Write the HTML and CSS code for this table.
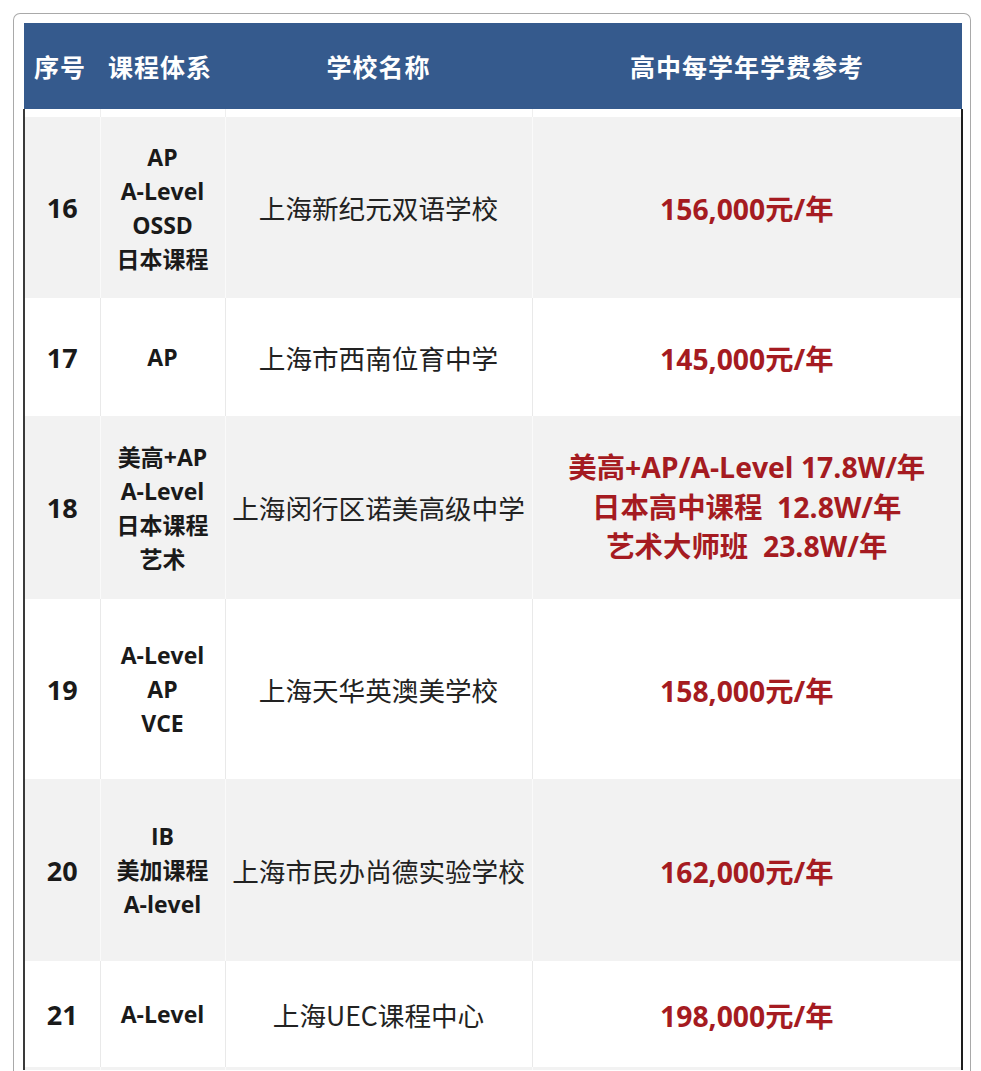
FILE: index.html
```html
<!DOCTYPE html>
<html lang="zh-CN">
<head>
<meta charset="utf-8">
<title>高中学费参考</title>
<link rel="stylesheet" href="styles.css">
</head>
<body>
<div class="frame">
  <table class="fees">
    <colgroup>
      <col class="c-no">
      <col class="c-course">
      <col class="c-school">
      <col class="c-fee">
    </colgroup>
    <thead>
      <tr class="head">
        <th>序号</th>
        <th>课程体系</th>
        <th>学校名称</th>
        <th>高中每学年学费参考</th>
      </tr>
    </thead>
    <tbody>
      <tr class="gap"><td></td><td></td><td></td><td></td></tr>
      <tr class="grey h181">
        <td class="no">16</td>
        <td class="course">AP<br>A-Level<br>OSSD<br>日本课程</td>
        <td class="school">上海新纪元双语学校</td>
        <td class="fee">156,000元/年</td>
      </tr>
      <tr class="white h118">
        <td class="no">17</td>
        <td class="course">AP</td>
        <td class="school">上海市西南位育中学</td>
        <td class="fee">145,000元/年</td>
      </tr>
      <tr class="grey h183">
        <td class="no">18</td>
        <td class="course">美高+AP<br>A-Level<br>日本课程<br>艺术</td>
        <td class="school">上海闵行区诺美高级中学</td>
        <td class="fee multi">美高+AP/A-Level 17.8W/年<br>日本高中课程  12.8W/年<br>艺术大师班  23.8W/年</td>
      </tr>
      <tr class="white h180">
        <td class="no">19</td>
        <td class="course">A-Level<br>AP<br>VCE</td>
        <td class="school">上海天华英澳美学校</td>
        <td class="fee">158,000元/年</td>
      </tr>
      <tr class="grey h182">
        <td class="no">20</td>
        <td class="course">IB<br>美加课程<br>A-level</td>
        <td class="school">上海市民办尚德实验学校</td>
        <td class="fee">162,000元/年</td>
      </tr>
      <tr class="white h106">
        <td class="no">21</td>
        <td class="course">A-Level</td>
        <td class="school">上海UEC课程中心</td>
        <td class="fee">198,000元/年</td>
      </tr>
      <tr class="grey h3">
        <td></td><td></td><td></td><td></td>
      </tr>
    </tbody>
  </table>
</div>
</body>
</html>
```

FILE: styles.css
```css
html, body {
  margin: 0;
  padding: 0;
  background: #ffffff;
}

body {
  font-family: "Open Sans", "Noto Sans CJK SC", sans-serif;
  color: #1c1c1c;
  height: 1071px;
  overflow: hidden;
}

.frame {
  margin: 13px 10px 0 13px;
  border: 1.5px solid #a9a9a9;
  border-bottom: none;
  border-radius: 7px 7px 0 0;
  padding: 9px 8px 0 9px;
  height: 1058px;
  box-sizing: border-box;
  overflow: hidden;
}

.fees {
  width: 938px;
  border-collapse: collapse;
  table-layout: fixed;
}

.c-no { width: 76px; }
.c-course { width: 125px; }
.c-school { width: 307px; }
.c-fee { width: 430px; }

.head {
  height: 86px;
  background: #355a8d;
}

.head th {
  color: #ffffff;
  font-family: "Noto Sans CJK SC", sans-serif;
  font-weight: 700;
  font-size: 25px;
  letter-spacing: 1px;
  padding: 0;
  vertical-align: middle;
  text-align: center;
}

.head th:first-child {
  text-align: left;
  padding-left: 10px;
}

.head th:nth-child(2) {
  text-align: left;
  padding-left: 8px;
}

tbody td {
  padding: 0;
  text-align: center;
  vertical-align: middle;
  border-left: 1px solid #e9e9e9;
}

tbody td:first-child {
  border-left: 2px solid #3a3a3a;
}

tbody td:last-child {
  border-right: 2px solid #1e1e1e;
}

.grey td:not(:first-child) {
  border-left-color: #fafafa;
}

.gap { height: 8px; background: #ffffff; }
.gap td:not(:first-child) { border-left-color: #efefef; }

.grey { background: #f2f2f2; }
.white { background: #ffffff; }

.h181 { height: 181px; }
.h118 { height: 118px; }
.h183 { height: 183px; }
.h180 { height: 180px; }
.h182 { height: 182px; }
.h106 { height: 106px; }
.h3 { height: 3px; }

.no {
  font-weight: 700;
  font-size: 27px;
  color: #1a1a1a;
}

.course {
  font-weight: 700;
  font-size: 23px;
  line-height: 34px;
  color: #1a1a1a;
}

.school {
  font-family: "Noto Sans CJK SC", sans-serif;
  font-weight: 400;
  font-size: 26.6px;
  color: #222222;
}

.fee {
  font-weight: 700;
  font-size: 28.3px;
  color: #a51b21;
}

.fee.multi {
  white-space: pre;
  line-height: 39.5px;
  font-size: 28.4px;
}
```
